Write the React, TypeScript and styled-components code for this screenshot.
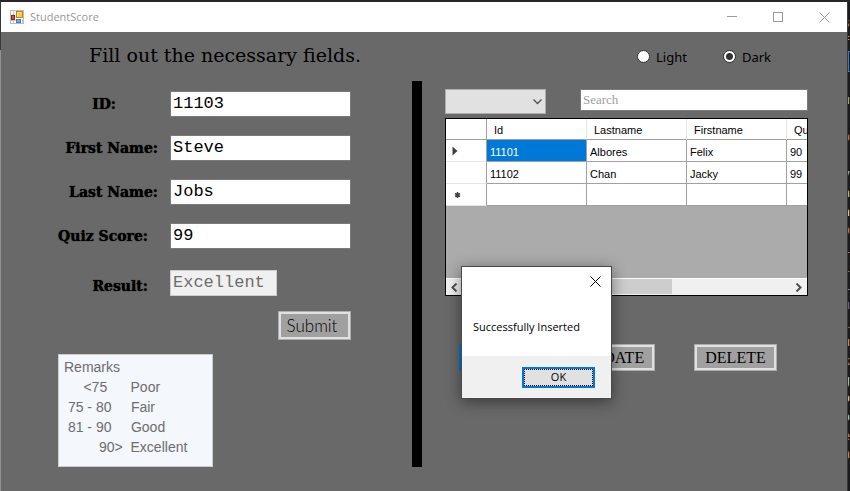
import React, { useState } from "react";
import styled, { createGlobalStyle } from "styled-components";

const GlobalStyle = createGlobalStyle`
  *, *::before, *::after { box-sizing: border-box; }
  body { margin: 0; background: #1e1e1e; }
  button, input, select, textarea { margin: 0; font: inherit; color: inherit; border-radius: 0; }
  button { padding: 0; }
`;

const segoe = `"Open Sans", "Noto Sans", sans-serif`;

const Desktop = styled.div`
  display: grid;
  grid-template-columns: minmax(0, 1fr) 3px;
  min-height: 100vh;
  padding: 2px 0 0 1px;
  background: linear-gradient(#27272a 0 2px, transparent 2px),
    linear-gradient(#38383c 50px, #8c9299 50px);
`;

const EditorEdge = styled.div`
  display: flex;
  flex-direction: column;
  padding: 12px 0 27px;
  overflow: hidden;
  border-left: 1px solid #3c3c3c;
  background: #1b1b1d;
  font: 12px/18px "DejaVu Sans Mono", monospace;
`;

const EdgeGlyph = styled.span<{ $color: string }>`
  flex: 1;
  color: ${(p) => p.$color};
  direction: rtl;
`;

const EdgeBox = styled.span`
  flex: 1;
  border: solid #3a78c0;
  border-width: 1px 0 1px 1px;
`;

const Window = styled.main`
  position: relative;
  display: flex;
  flex-direction: column;
  background: #696969;
  color: #000;
`;

const TitleBar = styled.header`
  display: flex;
  align-items: center;
  height: 30px;
  padding-left: 9px;
  background: #fff;
  color: #999;
  font: 11px/16px ${segoe};
`;

const Title = styled.span`
  flex: 1;
  padding-left: 6px;
`;

const CaptionButton = styled.button`
  display: grid;
  place-items: center;
  width: 46px;
  height: 30px;
  border: 0;
  background: none;
  color: #999;
`;

const Heading = styled.div`
  display: flex;
  justify-content: space-between;
  align-items: center;
  height: 49px;
  padding: 0 76px 0 88px;
`;

const Instruction = styled.h1`
  margin: 0;
  padding-bottom: 3px;
  font: 400 19px/24px "DejaVu Serif", serif;
`;

const ThemeChoice = styled.fieldset`
  display: flex;
  gap: 36px;
  margin: 0;
  padding: 0;
  border: 0;
`;

const Option = styled.label`
  display: flex;
  align-items: center;
  gap: 6px;
  font: 13px/16px "Noto Sans", sans-serif;
`;

const Radio = styled.input`
  appearance: none;
  width: 13px;
  height: 13px;
  border: 1px solid #333;
  border-radius: 50%;
  background: #fff;
  &:checked {
    background: radial-gradient(circle, #333 0 3px, #fff 4px);
  }
`;

const Columns = styled.div`
  display: grid;
  grid-template-columns: minmax(0, 411fr) 10px minmax(0, 425fr);
  flex: 1;
  padding-bottom: 24px;
`;

const Divider = styled.div`
  background: #000;
`;

const EntryForm = styled.form`
  display: flex;
  flex-direction: column;
  padding: 10px 61px 0 57px;
`;

const Fields = styled.div`
  display: flex;
  flex-direction: column;
  gap: 18px;
`;

const FieldRow = styled.div`
  display: grid;
  grid-template-columns: 112px minmax(0, 1fr);
  align-items: center;
`;

const ResultRow = styled(FieldRow)`
  align-items: end;
  margin-top: 21px;
`;

const insets = { near: 12, mid: 22, far: 54 };

const FieldLabel = styled.label<{ $inset: keyof typeof insets }>`
  padding-right: ${(p) => insets[p.$inset]}px;
  text-align: right;
  white-space: nowrap;
  font: 900 14px/20px "DejaVu Serif", serif;
  text-shadow: 0 0 1px #000;
`;

const TextField = styled.input`
  width: 100%;
  height: 26px;
  padding: 0 2px 2px;
  border: 1px solid #7a7a7a;
  background: #fff;
  font: 17px/20px "Liberation Mono", monospace;
  outline: 0;
`;

const ResultField = styled(TextField)`
  width: 107px;
  border-color: #ccc;
  background: #f0f0f0;
  color: #6d6d6d;
`;

const FlatButton = styled.button`
  border: 3px solid #e1e1e1;
  outline: 1px solid #adadad;
  outline-offset: -1px;
  background: #a0a0a0;
`;

const SubmitButton = styled(FlatButton)`
  align-self: flex-end;
  width: 73px;
  height: 29px;
  margin-top: 15px;
  padding-right: 5px;
  font: 300 17px/20px Lato, sans-serif;
`;

const Remarks = styled.textarea`
  width: 155px;
  height: 113px;
  margin-top: 14px;
  padding: 2px 5px;
  border: 1px solid #ccc;
  background: #f4f7fc;
  color: #6d6d6d;
  font: 14px/20px "Liberation Sans", sans-serif;
  resize: none;
  overflow: hidden;
  white-space: pre;
  outline: 0;
`;

const Records = styled.section`
  display: flex;
  flex-direction: column;
  padding: 8px 39px 0 23px;
`;

const Filters = styled.div`
  display: flex;
  align-items: flex-start;
  gap: 34px;
`;

const ComboBox = styled.div`
  display: grid;
  width: 101px;
  align-items: center;
  & > * { grid-area: 1 / 1; }
  & > svg { justify-self: end; margin-right: 4px; pointer-events: none; }
`;

const Combo = styled.select`
  appearance: none;
  width: 100%;
  height: 25px;
  border: 1px solid #adadad;
  background: #e1e1e1;
`;

const Search = styled.input`
  flex: 1;
  min-width: 0;
  height: 22px;
  padding: 0 2px;
  border: 1px solid #7a7a7a;
  background: #fff;
  font: 13px/16px "Liberation Serif", serif;
  &::placeholder { color: #a0a0a0; opacity: 1; }
`;

const GridFrame = styled.div`
  display: flex;
  flex-direction: column;
  height: 178px;
  margin-top: 4px;
  border: 1px solid #000;
  background: #ababab;
`;

const GridView = styled.div`
  flex: 1;
  overflow: hidden;
`;

const Grid = styled.table`
  width: 441px;
  table-layout: fixed;
  border-collapse: separate;
  border-spacing: 0;
  background: #fff;
  font: 11px/14px "Liberation Sans", sans-serif;
`;

const HeadCell = styled.th<{ $corner?: boolean }>`
  width: ${(p) => (p.$corner ? 41 : 100)}px;
  height: 21px;
  padding: 2px 7px 0;
  border-right: 1px solid ${(p) => (p.$corner ? "#a0a0a0" : "#e5e5e5")};
  border-bottom: 1px solid #a0a0a0;
  text-align: left;
  font-weight: 400;
`;

const RowHead = styled.th`
  height: 22px;
  padding: 0 6px;
  border-right: 1px solid #a0a0a0;
  border-bottom: 1px solid #e5e5e5;
  text-align: left;
  & > svg { display: block; }
`;

const Cell = styled.td<{ $selected?: boolean }>`
  height: 22px;
  padding: 2px 3px 0;
  border-right: 1px solid #a0a0a0;
  border-bottom: 1px solid #a0a0a0;
  background: ${(p) => (p.$selected ? "#0078d7" : "#fff")};
  color: ${(p) => (p.$selected ? "#fff" : "#000")};
`;

const ScrollBar = styled.div`
  display: flex;
  height: 17px;
  border-top: 1px solid #fff;
  background: #f0f0f0;
`;

const ScrollButton = styled.button`
  display: grid;
  place-items: center;
  width: 17px;
  border: 0;
  background: #f0f0f0;
`;

const ScrollTrack = styled.div`
  flex: 1;
`;

const ScrollThumb = styled.div`
  width: 64%;
  height: 15px;
  background: #cdcdcd;
`;

const Actions = styled.div`
  display: grid;
  grid-template-columns: 74px 83px 83px;
  justify-content: space-between;
  margin-top: 48px;
  padding: 0 31px 0 14px;
`;

const ActionButton = styled(FlatButton)<{ $focused?: boolean }>`
  height: 27px;
  border-color: ${(p) => (p.$focused ? "#0078d7" : "#e1e1e1")};
  outline-color: ${(p) => (p.$focused ? "#0078d7" : "#adadad")};
  font: 16px/20px "Liberation Serif", serif;
`;

const MessageBox = styled.div`
  position: absolute;
  left: 460px;
  top: 264px;
  width: 151px;
  height: 133px;
  display: flex;
  flex-direction: column;
  border: 1px solid #4a4a4a;
  background: #fff;
  box-shadow: 0 3px 14px rgba(0, 0, 0, 0.45);
  font: 11px/16px ${segoe};
`;

const CloseButton = styled.button`
  align-self: flex-end;
  display: grid;
  place-items: center;
  width: 31px;
  height: 28px;
  border: 0;
  background: none;
`;

const Message = styled.p`
  flex: 1;
  margin: 0;
  padding: 24px 11px 0;
  white-space: nowrap;
`;

const MessageFooter = styled.div`
  display: flex;
  justify-content: flex-end;
  align-items: center;
  height: 42px;
  padding: 0 16px;
  background: #f0f0f0;
`;

const OkButton = styled.button`
  width: 73px;
  height: 21px;
  border: 2px solid #0078d7;
  outline: 1px dotted #000;
  outline-offset: -3px;
  background: #e1e1e1;
  line-height: 14px;
`;

const AppIcon = () => (
  <svg width="14" height="14" viewBox="0 0 14 14" aria-hidden="true">
    <rect x="0.5" y="0.5" width="13" height="13" fill="#fff" stroke="#bdbdbd" />
    <path d="M3.5 1v12M1 10.5h5M12.5 9v4" stroke="#c8c8c8" fill="none" />
    <rect x="6.5" y="1.5" width="6" height="6" fill="#fccb3a" stroke="#b98612" />
    <path d="M7.5 6.5V2.5h4" stroke="#ffe58a" fill="none" />
    <rect x="1.5" y="5.5" width="3" height="4" fill="#d8503c" stroke="#9d1c12" />
    <rect x="6.5" y="9.5" width="4" height="3" fill="#78b0f5" stroke="#4076cc" />
  </svg>
);

const Cross = () => (
  <svg width="11" height="11" viewBox="0 0 11 11" aria-hidden="true">
    <path d="M0.5 0.5l10 10M10.5 0.5l-10 10" stroke="currentColor" fill="none" />
  </svg>
);

const Chevron = ({ d, width, height }: { d: string; width: number; height: number }) => (
  <svg width={width} height={height} viewBox={`0 0 ${width} ${height}`} aria-hidden="true">
    <path d={d} stroke="#505050" strokeWidth={width > 8 ? 1.3 : 2} fill="none" />
  </svg>
);

const edgeGlyphs = [
  ["s", "#c8895c"], ["f", "#d69d6a"], ["box", ""], ["", ""], ["u", "#9fc0a8"], ["", ""],
  ["o", "#c8895c"], ["(", "#569cd6"], ["v", "#9cdcfe"], ["a", "#b5cea8"], ["a", "#dcdcdc"], ["o", "#c8895c"],
  ["l", "#d69d85"], ["l", "#c8895c"], ["i", "#9cdcfe"], ["u", "#6b70d8"], ["i", "#c8895c"], ["u", "#d69d85"],
  ["k", "#c8895c"], ["g", "#9cdcfe"], ["o", "#dcdcdc"], ["o", "#9cdcfe"], ["e", "#c8895c"], ["n", "#d69d6a"],
];

const fields: { id: string; label: string; value: string; inset: keyof typeof insets }[] = [
  { id: "student-id", label: "ID:", value: "11103", inset: "far" },
  { id: "first-name", label: "First Name:", value: "Steve", inset: "near" },
  { id: "last-name", label: "Last Name:", value: "Jobs", inset: "near" },
  { id: "quiz-score", label: "Quiz Score:", value: "99", inset: "mid" },
];

const students = [
  ["11101", "Albores", "Felix", "90"],
  ["11102", "Chan", "Jacky", "99"],
];

const remarks = [
  "Remarks",
  "     <75      Poor",
  " 75 - 80     Fair",
  " 81 - 90     Good",
  "         90>  Excellent",
].join("\n");

export default function App() {
  const [open, setOpen] = useState(true);

  return (
    <>
      <GlobalStyle />
      <Desktop>
        <Window>
          <TitleBar>
            <AppIcon />
            <Title>StudentScore</Title>
            <CaptionButton aria-label="Minimize">
              <svg width="10" height="10" aria-hidden="true"><path d="M0 4.5h10" stroke="currentColor" /></svg>
            </CaptionButton>
            <CaptionButton aria-label="Maximize">
              <svg width="10" height="10" aria-hidden="true"><rect x="0.5" y="0.5" width="9" height="9" fill="none" stroke="currentColor" /></svg>
            </CaptionButton>
            <CaptionButton aria-label="Close"><Cross /></CaptionButton>
          </TitleBar>

          <Heading>
            <Instruction>Fill out the necessary fields.</Instruction>
            <ThemeChoice aria-label="Theme">
              <Option><Radio type="radio" name="theme" />Light</Option>
              <Option><Radio type="radio" name="theme" defaultChecked />Dark</Option>
            </ThemeChoice>
          </Heading>

          <Columns>
            <EntryForm onSubmit={(e) => { e.preventDefault(); setOpen(true); }}>
              <Fields>
                {fields.map((f) => (
                  <FieldRow key={f.id}>
                    <FieldLabel htmlFor={f.id} $inset={f.inset}>{f.label}</FieldLabel>
                    <TextField id={f.id} defaultValue={f.value} />
                  </FieldRow>
                ))}
              </Fields>
              <ResultRow>
                <FieldLabel htmlFor="result" $inset="mid">Result:</FieldLabel>
                <ResultField id="result" readOnly value="Excellent" />
              </ResultRow>
              <SubmitButton type="submit">Submit</SubmitButton>
              <Remarks aria-label="Remarks" readOnly value={remarks} />
            </EntryForm>

            <Divider />

            <Records>
              <Filters>
                <ComboBox>
                  <Combo aria-label="Search by" />
                  <Chevron d="M0.5 0.5l4 4l4-4" width={9} height={6} />
                </ComboBox>
                <Search type="text" aria-label="Search" placeholder="Search" />
              </Filters>

              <GridFrame>
                <GridView>
                  <Grid>
                    <thead>
                      <tr>
                        <HeadCell $corner />
                        <HeadCell>Id</HeadCell>
                        <HeadCell>Lastname</HeadCell>
                        <HeadCell>Firstname</HeadCell>
                        <HeadCell>Quiz</HeadCell>
                      </tr>
                    </thead>
                    <tbody>
                      {students.map((row, r) => (
                        <tr key={row[0]}>
                          <RowHead scope="row">
                            {r === 0 && (
                              <svg width="6" height="10" aria-hidden="true"><path d="M0.5 0.5l5 4.5l-5 4.5z" fill="#404040" /></svg>
                            )}
                          </RowHead>
                          {row.map((value, c) => (
                            <Cell key={c} $selected={r === 0 && c === 0}>{value}</Cell>
                          ))}
                        </tr>
                      ))}
                      <tr>
                        <RowHead scope="row">
                          <svg width="11" height="8" aria-hidden="true">
                            <path d="M5.5 1v6M3 2.5l5 3M3 5.5l5-3" stroke="#404040" strokeWidth="1.5" />
                          </svg>
                        </RowHead>
                        <Cell /><Cell /><Cell /><Cell />
                      </tr>
                    </tbody>
                  </Grid>
                </GridView>
                <ScrollBar>
                  <ScrollButton aria-label="Scroll left"><Chevron d="M5.5 0.5l-4 4l4 4" width={7} height={9} /></ScrollButton>
                  <ScrollTrack><ScrollThumb /></ScrollTrack>
                  <ScrollButton aria-label="Scroll right"><Chevron d="M1.5 0.5l4 4l-4 4" width={7} height={9} /></ScrollButton>
                </ScrollBar>
              </GridFrame>

              <Actions>
                <ActionButton type="button" $focused>INSERT</ActionButton>
                <ActionButton type="button">UPDATE</ActionButton>
                <ActionButton type="button">DELETE</ActionButton>
              </Actions>
            </Records>
          </Columns>

          {open && (
            <MessageBox role="dialog" aria-labelledby="message">
              <CloseButton aria-label="Close message" onClick={() => setOpen(false)}><Cross /></CloseButton>
              <Message id="message">Successfully Inserted</Message>
              <MessageFooter>
                <OkButton onClick={() => setOpen(false)}>OK</OkButton>
              </MessageFooter>
            </MessageBox>
          )}
        </Window>
        <EditorEdge aria-hidden="true">
          {edgeGlyphs.map(([glyph, color], i) =>
            glyph === "box" ? <EdgeBox key={i} /> : <EdgeGlyph key={i} $color={color}>{glyph}</EdgeGlyph>
          )}
        </EditorEdge>
      </Desktop>
    </>
  );
}
